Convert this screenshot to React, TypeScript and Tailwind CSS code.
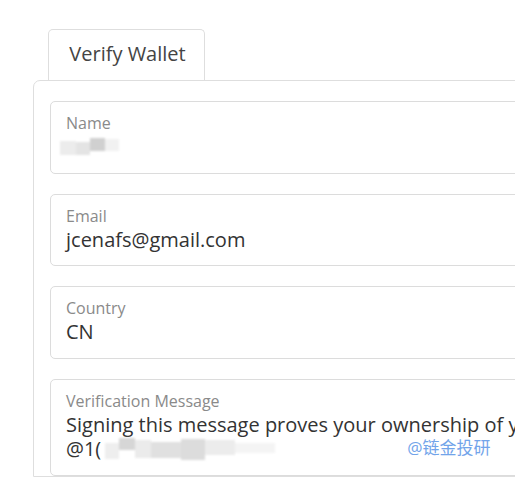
import React from "react";

const Field = ({
  label,
  children,
  className = "",
}: {
  label: string;
  children: React.ReactNode;
  className?: string;
}) => {
  return (
    <div
      className={`w-full rounded-[5px] border border-[#dcdcdc] bg-white px-[15px] pt-[9px] ${className}`}
    >
      <p className="text-[16px] leading-[24px] text-[#8a8a8a]">{label}</p>
      <div className="text-[20px] leading-[24px] text-[#333]">{children}</div>
    </div>
  );
};

// mosaic blobs over hidden values
const NameBlur = () => (
  <div className="-ml-[6px] mt-[3px] flex h-[18px] items-start blur-[1px]">
    <span className="mt-[3px] h-[14px] w-[16px] bg-[#ececec]" />
    <span className="mt-[4px] h-[13px] w-[14px] bg-[#e4e4e4]" />
    <span className="h-[13px] w-[15px] bg-[#d0d0d0]" />
    <span className="mt-[1px] h-[12px] w-[14px] bg-[#f1f1f1]" />
  </div>
);

const MessageBlur = () => (
  <div className="ml-[4px] flex h-[24px] items-start blur-[1px]">
    <span className="mt-[6px] h-[16px] w-[14px] bg-[#eeeeee]" />
    <span className="mt-[1px] h-[12px] w-[16px] bg-[#d6d6d6]" />
    <span className="mt-[3px] h-[18px] w-[16px] bg-[#ebebeb]" />
    <span className="mt-[5px] h-[16px] w-[30px] bg-[#e0e0e0]" />
    <span className="mt-[2px] h-[21px] w-[24px] bg-[#dcdcdc]" />
    <span className="mt-[3px] h-[15px] w-[30px] bg-[#ececec]" />
    <span className="mt-[6px] h-[10px] w-[40px] bg-[#f4f4f4]" />
  </div>
);

export default function App() {
  return (
    <div
      className="h-[483px] w-[515px] overflow-hidden bg-white pl-[33px] pt-[29px]"
      style={{ fontFamily: '"Open Sans", "Noto Sans CJK SC", sans-serif' }}
    >
      <div className="ml-[15px] flex h-[51px] w-[157px] items-center justify-center rounded-t-[5px] border border-b-0 border-[#dedede] pb-[2px] pl-[2px] text-[20px] text-[#444]">
        Verify Wallet
      </div>
      <div className="w-[560px] rounded-tl-[7px] border border-[#dedede] bg-white pl-[16px] pt-[20px]">
        <div className="flex flex-col gap-[20px]">
          <Field label="Name" className="h-[73px]">
            <NameBlur />
          </Field>
          <Field label="Email" className="h-[72px]">
            jcenafs@gmail.com
          </Field>
          <Field label="Country" className="h-[73px]">
            CN
          </Field>
          <Field label="Verification Message" className="h-[97px]">
            <p className="whitespace-nowrap">
              Signing this message proves your ownership of your wallet
            </p>
            <div className="flex h-[24px] items-start">
              <span>@1(</span>
              <MessageBlur />
              <span className="ml-[132px] mt-[-1px] text-[17px] leading-[24px] text-[#72a4ea]">
                @链金投研
              </span>
            </div>
          </Field>
        </div>
      </div>
    </div>
  );
}
